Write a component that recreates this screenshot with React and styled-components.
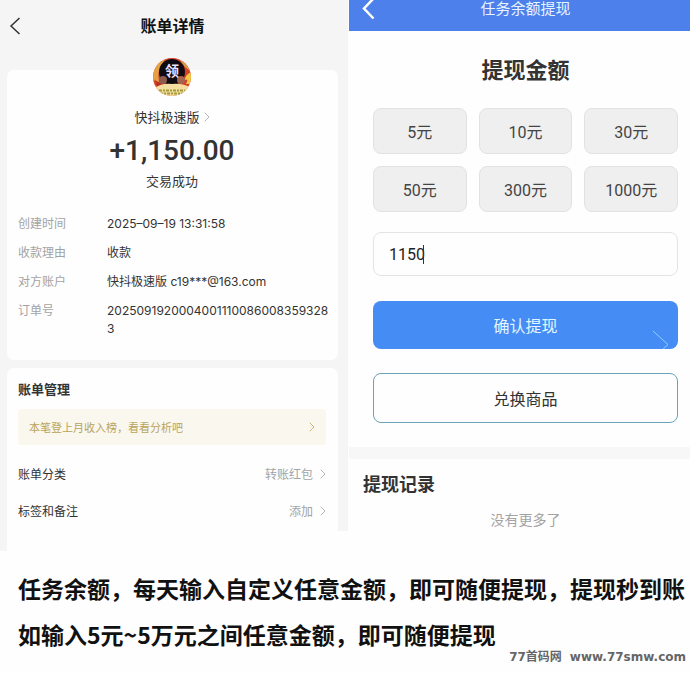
import React, { useState } from "react";
import styled, { createGlobalStyle } from "styled-components";

const GlobalStyle = createGlobalStyle`
  * {
    box-sizing: border-box;
    margin: 0;
    padding: 0;
  }
  body {
    background-color: #fefefe;
    font-family: "Inter", "Noto Sans CJK SC", sans-serif;
    color: #333;
  }
  button,
  input {
    font: inherit;
    color: inherit;
    border: none;
    background: none;
  }
  button {
    cursor: pointer;
  }
  a {
    color: inherit;
    text-decoration: none;
  }
`;

const Screens = styled.div`
  display: grid;
  grid-template-columns: 58fr 57fr;
  align-items: start;
`;

// bill detail
const Bill = styled.section`
  display: flex;
  flex-direction: column;
  padding: 0 10px 0 7px;
  background: linear-gradient(#fefefe, #fefefe) right bottom / 10px 20px
    no-repeat #f5f5f5;
`;
const BillHeader = styled.header`
  display: grid;
  grid-template-columns: 16px 1fr 16px;
  align-items: center;
  height: 52px;
  margin-bottom: 18px;
`;
const BillTitle = styled.h1`
  font-size: 16px;
  font-weight: 700;
  line-height: 24px;
  text-align: center;
  color: #111;
`;
const IconButton = styled.button`
  display: flex;
  align-items: center;
  justify-content: center;
`;
const Card = styled.div`
  padding: 0 12px 22px 11px;
  background-color: #fefefe;
  border-radius: 7px;
`;
const ManageCard = styled(Card)`
  margin-top: 8px;
  padding-top: 11px;
  border-radius: 7px 7px 0 0;
`;
const Summary = styled.div`
  display: flex;
  flex-direction: column;
  align-items: center;
  margin-top: -12px;
  font-size: 13px;
  line-height: 20px;
`;
const Merchant = styled.a`
  display: flex;
  align-items: center;
  gap: 4px;
  margin: 11px 0 6px;
`;
const Amount = styled.strong`
  font-family: "Roboto", sans-serif;
  font-size: 28px;
  font-weight: 500;
  line-height: 36px;
  margin-bottom: 2px;
`;
const Details = styled.dl`
  display: grid;
  grid-template-columns: 89px 1fr;
  row-gap: 11px;
  margin: 24px -6px 0 0;
  font-size: 12px;
  line-height: 18px;

  dt {
    color: #a3a3a3;
  }
  dd {
    word-break: break-all;
  }
`;
const CardTitle = styled.h2`
  font-size: 13px;
  font-weight: 700;
  line-height: 20px;
`;
const Notice = styled.a`
  display: flex;
  align-items: center;
  justify-content: space-between;
  height: 36px;
  margin: 10px 0;
  padding: 0 11px;
  border-radius: 3px;
  background-color: #faf7ef;
  color: #b8a45c;
  font-size: 11px;
`;
const Row = styled.a`
  display: flex;
  align-items: center;
  justify-content: space-between;
  height: 37px;
  font-size: 12px;
`;
const RowValue = styled.span`
  display: flex;
  align-items: center;
  gap: 7px;
  color: #a3a3a3;
`;

// withdrawal
const Withdraw = styled.section`
  font-family: "Roboto", "Noto Sans CJK SC", sans-serif;
  margin-left: 1px;
`;
const TopBar = styled.header`
  display: grid;
  grid-template-columns: 40px 1fr 28px;
  align-items: start;
  height: 31px;
  background-color: #4d80ea;
  color: #e8f4ff;
`;
const TopTitle = styled.h1`
  font-size: 15px;
  font-weight: 400;
  line-height: 18px;
  text-align: center;
`;
const Form = styled.form`
  display: flex;
  flex-direction: column;
  padding: 24px 12px 24px 24px;
`;
const FormTitle = styled.h2`
  font-size: 22px;
  font-weight: 700;
  line-height: 32px;
  text-align: center;
`;
const Amounts = styled.div`
  display: grid;
  grid-template-columns: repeat(3, 1fr);
  gap: 12px;
  margin: 21px 0 20px;
`;
const Chip = styled.button`
  height: 46px;
  border: 1px solid #e2e2e2;
  border-radius: 8px;
  background-color: #efefef;
  font-size: 16px;
  color: #444;
`;
const Field = styled.label`
  display: flex;
  align-items: center;
  height: 44px;
  padding: 0 15px;
  border: 1px solid #e4e4e4;
  border-radius: 8px;
  font-size: 16px;
  cursor: text;
`;
const AmountInput = styled.input`
  field-sizing: content;
  outline: none;
  color: #222;
`;
const Caret = styled.span`
  width: 1px;
  height: 19px;
  margin-left: -2px;
  background-color: #333;
`;
const Action = styled.button`
  position: relative;
  overflow: hidden;
  height: ${(props) => (props.$primary ? "48px" : "50px")};
  margin-top: ${(props) => (props.$primary ? "25px" : "24px")};
  border: ${(props) => (props.$primary ? "none" : "1px solid #6aa3b5")};
  border-radius: 8px;
  background-color: ${(props) => (props.$primary ? "#458cf5" : "#fefefe")};
  color: ${(props) => (props.$primary ? "#e4f6ff" : "#333")};
  font-size: 16px;
`;
const Corner = styled.svg`
  position: absolute;
  right: 8px;
  bottom: 0;
`;
const Records = styled.div`
  padding: 14px 12px 0 14px;
  border-top: 12px solid #f7f7f7;
`;
const RecordsTitle = styled.h2`
  font-size: 18px;
  font-weight: 700;
  line-height: 24px;
`;
const Empty = styled.p`
  margin-top: 12px;
  padding-left: 10px;
  font-size: 14px;
  line-height: 22px;
  text-align: center;
  color: #a3a3a3;
`;

const Caption = styled.footer`
  padding: 22px 4px 6px 18px;
  font-family: "Noto Sans CJK SC", sans-serif;
  font-size: 23px;
  font-weight: 700;
  line-height: 30px;
  color: #111;

  p + p {
    margin-top: 16px;
  }
`;
const Source = styled.a`
  display: flex;
  justify-content: flex-end;
  gap: 8px;
  font-family: "DejaVu Sans", "Noto Sans CJK SC", sans-serif;
  font-size: 12px;
  line-height: 16px;
  color: #666;
`;

const Chevron = ({ color = "#b5b5b5" }) => (
  <svg width="6" height="10" viewBox="0 0 6 10" fill="none" stroke={color}>
    <path d="M0.7 0.7L5 5L0.7 9.3" />
  </svg>
);

const Avatar = () => (
  <svg width="38" height="38" viewBox="0 0 38 38">
    <defs>
      <clipPath id="round">
        <circle cx="19" cy="19" r="19" />
      </clipPath>
    </defs>
    <g clipPath="url(#round)">
      <rect width="38" height="38" fill="#d4402a" />
      <path d="M0 12Q4 4 12 1L8 9Q4 14 6 24L0 22Z" fill="#e5a245" />
      <path d="M26 1Q34 5 37 13L32 9Z" fill="#d9a04a" />
      <path d="M38 14Q32 17 32 22Q36 20 33 26L38 26Z" fill="#f3c847" />
      <path d="M2 21Q4 25 9 26L5 30Z" fill="#b92c20" />
      <circle cx="19" cy="14" r="13" fill="#100b10" />
      <path d="M0 31Q8 25 19 26Q30 25 38 30V38H0Z" fill="#f4dea0" />
      <circle cx="10" cy="22" r="4" fill="#8d5b4c" />
      <circle cx="28" cy="22" r="4" fill="#a4654e" />
      <path
        d="M6 32.5H32M7 35.5H31"
        stroke="#a39a3c"
        strokeWidth="2"
        strokeDasharray="3 1 2 1"
      />
      <text
        x="19"
        y="18"
        textAnchor="middle"
        fontFamily="Noto Sans CJK SC"
        fontSize="14"
        fontWeight="700"
        fill="#efe2ff"
      >
        领
      </text>
    </g>
  </svg>
);

const details = [
  ["创建时间", "2025–09–19 13:31:58"],
  ["收款理由", "收款"],
  ["对方账户", "快抖极速版 c19***@163.com"],
  ["订单号", "20250919200040011100860083593283"],
];

const amounts = [5, 10, 30, 50, 300, 1000];

const App = () => {
  const [amount, setAmount] = useState("1150");

  return (
    <>
      <GlobalStyle />
      <Screens>
        <Bill>
          <BillHeader>
            <IconButton aria-label="返回">
              <svg width="12" height="18" viewBox="0 0 12 18" fill="none">
                <path d="M10.5 1L2 9L10.5 17" stroke="#333" strokeWidth="1.5" />
              </svg>
            </IconButton>
            <BillTitle>账单详情</BillTitle>
          </BillHeader>
          <Card>
            <Summary>
              <Avatar />
              <Merchant href="#merchant">
                快抖极速版 <Chevron />
              </Merchant>
              <Amount>+1,150.00</Amount>
              <span>交易成功</span>
            </Summary>
            <Details>
              {details.map(([label, value]) => (
                <React.Fragment key={label}>
                  <dt>{label}</dt>
                  <dd>{value}</dd>
                </React.Fragment>
              ))}
            </Details>
          </Card>
          <ManageCard>
            <CardTitle>账单管理</CardTitle>
            <Notice href="#analysis">
              本笔登上月收入榜，看看分析吧 <Chevron color="#c9b66f" />
            </Notice>
            <Row href="#category">
              账单分类
              <RowValue>
                转账红包 <Chevron />
              </RowValue>
            </Row>
            <Row href="#tags">
              标签和备注
              <RowValue>
                添加 <Chevron />
              </RowValue>
            </Row>
          </ManageCard>
        </Bill>

        <Withdraw>
          <TopBar>
            <IconButton aria-label="返回">
              <svg width="14" height="20" viewBox="0 0 14 20" fill="none">
                <path d="M12 -2L2 8.5L11.5 18.5" stroke="#fff" strokeWidth="2.5" />
              </svg>
            </IconButton>
            <TopTitle>任务余额提现</TopTitle>
          </TopBar>
          <Form onSubmit={(e) => e.preventDefault()}>
            <FormTitle>提现金额</FormTitle>
            <Amounts>
              {amounts.map((value) => (
                <Chip
                  key={value}
                  type="button"
                  onClick={() => setAmount(String(value))}
                >
                  {value}元
                </Chip>
              ))}
            </Amounts>
            <Field>
              <AmountInput
                aria-label="提现金额"
                inputMode="numeric"
                value={amount}
                onChange={(e) => setAmount(e.target.value)}
              />
              <Caret />
            </Field>
            <Action $primary type="submit">
              确认提现
              <Corner width="18" height="19" viewBox="0 0 18 19" fill="none">
                <path d="M1 1L16 14.5L10 20" stroke="#8fd0ff" />
              </Corner>
            </Action>
            <Action type="button">兑换商品</Action>
          </Form>
          <Records>
            <RecordsTitle>提现记录</RecordsTitle>
            <Empty>没有更多了</Empty>
          </Records>
        </Withdraw>
      </Screens>
      <Caption>
        <p>任务余额，每天输入自定义任意金额，即可随便提现，提现秒到账</p>
        <p>如输入5元~5万元之间任意金额，即可随便提现</p>
        <Source href="#source">
          <span>77首码网</span>
          <span>www.77smw.com</span>
        </Source>
      </Caption>
    </>
  );
};

export default App;
